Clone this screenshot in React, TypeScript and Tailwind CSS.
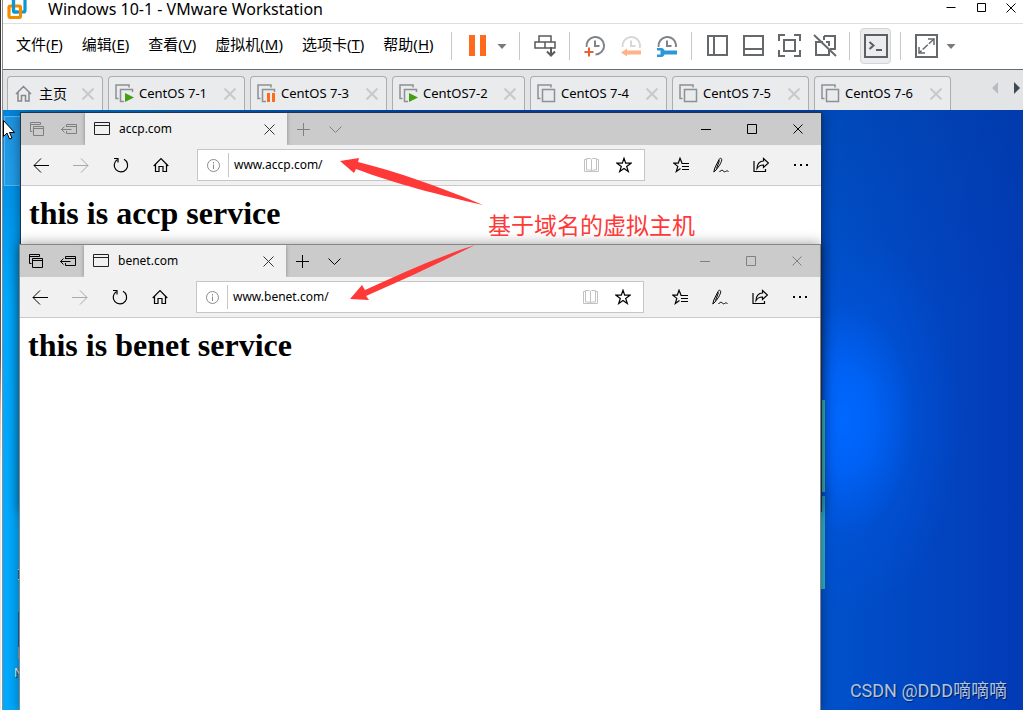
import { useState } from "react"
import type { ReactNode } from "react"
import clsx from "clsx"

type VmState = "running" | "paused" | "off"

const menus = [
    { label: "文件", hotkey: "F" },
    { label: "编辑", hotkey: "E" },
    { label: "查看", hotkey: "V" },
    { label: "虚拟机", hotkey: "M" },
    { label: "选项卡", hotkey: "T" },
    { label: "帮助", hotkey: "H" },
]

const vmTabs: { name: string; state: VmState; width: string }[] = [
    { name: "CentOS 7-1", state: "running", width: "w-[137px]" },
    { name: "CentOS 7-3", state: "paused", width: "w-[137px]" },
    { name: "CentOS7-2", state: "running", width: "w-[133px]" },
    { name: "CentOS 7-4", state: "off", width: "w-[137px]" },
    { name: "CentOS 7-5", state: "off", width: "w-[137px]" },
    { name: "CentOS 7-6", state: "off", width: "w-[137px]" },
]

const uiFont = "font-['Noto_Sans','Noto_Sans_CJK_SC',sans-serif]"

function Icon({ children, size = 24, className }: { children: ReactNode; size?: number; className?: string }) {
    return (
        <svg
            width={size}
            height={size}
            viewBox={`0 0 ${size} ${size}`}
            fill="none"
            stroke="currentColor"
            className={clsx("shrink-0", className)}
            aria-hidden="true"
        >
            {children}
        </svg>
    )
}

function Cross({ size, weight = 1, className }: { size: number; weight?: number; className?: string }) {
    return (
        <Icon size={size} className={className}>
            <path
                d={`M0.5 0.5L${size - 0.5} ${size - 0.5}M${size - 0.5} 0.5L0.5 ${size - 0.5}`}
                strokeWidth={weight}
            />
        </Icon>
    )
}

function Divider() {
    return <span className="mr-px h-7 w-px shrink-0 bg-[#c8c8c8]" />
}

function Caret() {
    return (
        <button aria-label="More" className="shrink-0">
            <Icon size={10} className="text-[#7a7a7a]">
                <path d="M0.5 3h9L5 8z" fill="currentColor" stroke="none" />
            </Icon>
        </button>
    )
}

function Clock({ className, children }: { className: string; children: ReactNode }) {
    return (
        <Icon>
            <g className={className} stroke="currentColor">
                <path d="M3.6 13A8.8 8.8 0 1 1 12.5 20.5" strokeWidth="2" />
                <path d="M12 6.5V12h4.5" strokeWidth="2" />
            </g>
            {children}
        </Icon>
    )
}

function ToolButton({ label, children }: { label: string; children: ReactNode }) {
    return (
        <button aria-label={label} className="shrink-0 text-[#66696c]">
            {children}
        </button>
    )
}

function TitleBar() {
    return (
        <header className="flex h-6 items-start justify-between border-b border-[#dedede] bg-white pr-[7px] pl-1">
            <div className="flex items-start gap-[21px]">
                <svg width="20" height="20" viewBox="0 0 20 20" fill="none" aria-hidden="true">
                    <rect x="6.500" y="-3" width="11.500" height="15" rx="1.500" stroke="#0f95d0" strokeWidth="3.200" />
                    <rect x="2" y="6" width="11.500" height="11.500" rx="1.500" stroke="#f38b00" strokeWidth="3.200" />
                    <path d="M6.500 0v10.500a1.500 1.500 0 0 0 1.500 1.500h3" stroke="#0f95d0" strokeWidth="3.200" />
                </svg>
                <h1 className="text-[16px] leading-[18px] whitespace-nowrap text-black">
                    Windows 10-1 - VMware Workstation
                </h1>
            </div>
            <div className="flex gap-5 pt-[3px] text-black">
                <button aria-label="Minimize">
                    <Icon size={10}><path d="M0.5 4.5h9" /></Icon>
                </button>
                <button aria-label="Maximize">
                    <Icon size={10}><path d="M1.5 0.5h8v8h-8z" /></Icon>
                </button>
                <button aria-label="Close">
                    <Cross size={10} />
                </button>
            </div>
        </header>
    )
}

function MenuBar() {
    return (
        <div className="flex h-[45px] items-center bg-white pb-px">
            <nav className="flex w-[448px] shrink-0 items-center gap-[19px] pb-1 pl-[13px] text-[15px] leading-5 text-black">
                {menus.map(({ label, hotkey }) => (
                    <button key={hotkey} className="whitespace-nowrap">
                        {label}(<u className="underline-offset-2">{hotkey}</u>)
                    </button>
                ))}
            </nav>
            <div className="flex items-center gap-3">
                <Divider />
                <div className="flex items-center gap-2">
                    <ToolButton label="Pause">
                        <Icon><path d="M4 1h6v21H4zM15 1h6v21h-6z" fill="#ff6a1c" stroke="none" /></Icon>
                    </ToolButton>
                    <Caret />
                </div>
                <Divider />
                <ToolButton label="Send Ctrl+Alt+Del">
                    <Icon className="text-[#5a5a5a]">
                        <path d="M6 2h12v6H6zM2 8h10v6H2zM12 8h10v6H12" strokeWidth="1.500" />
                        <path d="M18 13v8M14 17.500l4 4 4-4" strokeWidth="2" />
                    </Icon>
                </ToolButton>
                <Divider />
                <ToolButton label="Take snapshot">
                    <Clock className="text-[#7f8487]">
                        <path d="M1 13h9v10H1z" fill="#fff" stroke="none" />
                        <path d="M6 13.500v9M1.500 18h9" stroke="#e8602c" strokeWidth="2" />
                    </Clock>
                </ToolButton>
                <ToolButton label="Revert snapshot">
                    <Clock className="text-[#d6d8d9]">
                        <path d="M1 14h23v9H1z" fill="#fff" stroke="none" />
                        <path d="M2 18.500l6-4v2h14v4H8v2z" fill="#ffb28c" stroke="none" />
                    </Clock>
                </ToolButton>
                <ToolButton label="Manage snapshots">
                    <Clock className="text-[#7f8487]">
                        <path d="M1 13h23v10H1z" fill="#fff" stroke="none" />
                        <path
                            d="M2 14h4.500c1.500 0 2.500 1.200 3 2.500H22v4H9.500c-.5 1.300-1.500 2.500-3 2.500H2v-2.500h3.500v-4H2z"
                            fill="#2b96d8"
                            stroke="none"
                        />
                    </Clock>
                </ToolButton>
                <Divider />
                <ToolButton label="Show library">
                    <Icon><path d="M3 2h19v19H3zM9 2v19" strokeWidth="2" /></Icon>
                </ToolButton>
                <ToolButton label="Show thumbnail bar">
                    <Icon><path d="M3 2h19v19H3zM3 15h19" strokeWidth="2" /></Icon>
                </ToolButton>
                <ToolButton label="Full screen">
                    <Icon>
                        <path d="M7 6h11v11H7z" strokeWidth="2" />
                        <path d="M2 7V1h6M17 1h6v6M23 16v6h-6M8 22H2v-6" strokeWidth="2" />
                    </Icon>
                </ToolButton>
                <ToolButton label="Unity">
                    <Icon>
                        <path d="M11 2h11v13h-5M10 8H3v13h13v-5M11 2v4M16 12V8h-3" strokeWidth="2" />
                        <path d="M1 1l22 21" strokeWidth="2" />
                    </Icon>
                </ToolButton>
                <Divider />
                <button
                    aria-label="Console view"
                    className="-mx-[3px] flex h-9 w-[31px] items-center justify-center rounded border border-[#d4d4d4] bg-[#ececee] text-[#5a5f63]"
                >
                    <Icon>
                        <path d="M1 1h22v22H1z" strokeWidth="2" />
                        <path d="M5.500 8l4 3.500-4 3.500M12 16h6" strokeWidth="2" />
                    </Icon>
                </button>
                <Divider />
                <div className="flex items-center gap-2">
                    <ToolButton label="Stretch guest">
                        <Icon>
                            <path d="M2 1h21v22H2z" strokeWidth="2" />
                            <path d="M14 5h6v6M11 19H5v-6" strokeWidth="1.500" />
                            <path d="M20 5L5 19" strokeWidth="1.500" strokeDasharray="7 1.500" />
                        </Icon>
                    </ToolButton>
                    <Caret />
                </div>
            </div>
        </div>
    )
}

function VmIcon({ state }: { state: VmState }) {
    return (
        <Icon size={19} className="text-[#8d9092]">
            <path d="M3.500 14.500H1V1h13v2.500" strokeWidth="1.500" />
            <path d="M5.500 5.500h12v12h-12z" strokeWidth="1.500" />
            {state === "running" && (
                <>
                    <path d="M9 8h10v11H9z" fill="#eaebed" stroke="none" />
                    <path d="M10 9v9l9-4.500z" fill="#44a010" stroke="none" />
                </>
            )}
            {state === "paused" && (
                <>
                    <path d="M9 8h10v11H9z" fill="#eaebed" stroke="none" />
                    <path d="M10 9h3v9h-3zM15 9h3v9h-3z" fill="#ff6a1c" stroke="none" />
                </>
            )}
        </Icon>
    )
}

function TabStrip() {
    const [active, setActive] = useState("CentOS 7-1")
    const shell = "flex h-[34px] shrink-0 items-center rounded-t border border-b-0 border-[#adadad] bg-[#eaebed]"

    return (
        <div className="flex h-[41px] items-end border-t border-[#6a6a6a] bg-[#e3e4e6] pl-1">
            <div className="flex gap-[5px]">
                <div className={clsx(shell, "w-24 justify-between pr-2 pl-[7px]")}>
                    <button className="flex items-center gap-[7px] text-sm text-black">
                        <Icon size={17} className="text-[#85898b]">
                            <path d="M1 9l7.500-7.500L16 9M3 7.500V16h3.500v-5.500h4V16H14V7.500" strokeWidth="1.500" />
                        </Icon>
                        主页
                    </button>
                    <button aria-label="Close home">
                        <Cross size={12} weight={2} className="text-[#c9c9c9]" />
                    </button>
                </div>
                {vmTabs.map(({ name, state, width }) => (
                    <div key={name} className={clsx(shell, width, "justify-between pr-2 pl-1.5")}>
                        <button
                            className="flex items-center gap-[5px] text-[13px] whitespace-nowrap text-black"
                            aria-pressed={active === name}
                            onClick={() => setActive(name)}
                        >
                            <VmIcon state={state} />
                            {name}
                        </button>
                        <button aria-label={`Close ${name}`}>
                            <Cross size={12} weight={2} className="text-[#c9c9c9]" />
                        </button>
                    </div>
                ))}
            </div>
            <div className="ml-auto flex gap-[15px] self-start pt-3">
                <button aria-label="Scroll tabs left">
                    <svg width="7" height="12" viewBox="0 0 7 12" aria-hidden="true">
                        <path d="M6 0v12L0 6z" fill="#b9bcbf" />
                    </svg>
                </button>
                <button aria-label="Scroll tabs right">
                    <svg width="9" height="12" viewBox="0 0 9 12" aria-hidden="true">
                        <path d="M0 0v12l6-6z" fill="#3d4a55" />
                    </svg>
                </button>
            </div>
        </div>
    )
}

function BarButton({ label, className, children }: { label: string; className?: string; children: ReactNode }) {
    return (
        <button aria-label={label} className={clsx("flex w-10 shrink-0 items-center justify-center", className)}>
            {children}
        </button>
    )
}

interface BrowserProps {
    host: string
    heading: string
    className: string
    auxClass: string
    controlClass: string
}

function BrowserWindow({ host, heading, className, auxClass, controlClass }: BrowserProps) {
    const [url, setUrl] = useState(`www.${host}/`)

    return (
        <section className={clsx("absolute flex w-[802px] flex-col border bg-white", className)}>
            <div className="flex h-8 shrink-0 items-stretch bg-[#cbcbcb]">
                <div className={clsx("flex w-16 items-center justify-between pr-2 pl-2", auxClass)}>
                    <button aria-label="Tabs set aside">
                        <Icon size={16}>
                            <path d="M3.500 10.500h-2v-9h10v2M1.500 3.500h10" />
                            <path d="M4.500 5.500h10v9h-10zM4.500 7.500h10" />
                        </Icon>
                    </button>
                    <button aria-label="Set tabs aside">
                        <Icon size={16}>
                            <path d="M5.500 6V3.500h10v9h-10V10M5.500 5.500h10" />
                            <path d="M0.500 8.500h10M3.500 5.500l-3 3 3 3" />
                        </Icon>
                    </button>
                </div>
                <div className="flex w-[202px] items-center bg-[#f1f1f1] pr-3 pl-2 shadow-[0_0_4px_rgba(0,0,0,0.35)] [clip-path:inset(0_-6px_0_-6px)]">
                    <Icon size={18} className="text-[#222]">
                        <path d="M1.500 2.500h15v12h-15zM1.500 5.500h15" />
                    </Icon>
                    <span className="ml-2 flex-1 text-[12px] leading-4 text-black">{host}</span>
                    <button aria-label="Close tab">
                        <Cross size={11} className="text-[#333]" />
                    </button>
                </div>
                <div className={clsx("flex items-center gap-[19px] pl-[10px]", auxClass)}>
                    <button aria-label="New tab">
                        <Icon size={13}><path d="M6.500 0v13M0 6.500h13" /></Icon>
                    </button>
                    <button aria-label="Tab previews">
                        <Icon size={13}><path d="M0.500 3.500l6 6 6-6" /></Icon>
                    </button>
                </div>
                <div className={clsx("ml-auto flex", controlClass)}>
                    <button aria-label="Minimize" className="flex w-[46px] items-center justify-center">
                        <Icon size={10}><path d="M0 5.500h10" /></Icon>
                    </button>
                    <button aria-label="Maximize" className="flex w-[46px] items-center justify-center">
                        <Icon size={10}><path d="M0.500 0.500h9v9h-9z" /></Icon>
                    </button>
                    <button aria-label="Close" className="flex w-[46px] items-center justify-center">
                        <Cross size={10} />
                    </button>
                </div>
            </div>

            <div className="flex h-[41px] shrink-0 items-stretch border-b border-[#cacaca] bg-[#f1f1f1] text-black">
                <BarButton label="Back">
                    <Icon size={16}><path d="M1 8.500h15M8 1.500l-7 7 7 7" /></Icon>
                </BarButton>
                <BarButton label="Forward" className="text-[#a8a8a8]">
                    <Icon size={16}><path d="M0 8.500h15M8 1.500l7 7-7 7" /></Icon>
                </BarButton>
                <BarButton label="Refresh">
                    <Icon size={16}>
                        <path d="M11 2.300A6.700 6.700 0 1 1 4.500 2.500" strokeWidth="1.200" />
                        <path d="M1 1.500h4v4" strokeWidth="1.200" />
                    </Icon>
                </BarButton>
                <BarButton label="Home">
                    <Icon size={16}>
                        <path d="M0.700 9L8 1.700 15.300 9M2.500 7.500v7h3.500v-5h4v5h3.500v-7" strokeWidth="1.200" />
                    </Icon>
                </BarButton>
                <div className="mx-4 my-1 flex flex-1 items-center border border-[#c6c6c6] bg-white">
                    <Icon size={15} className="ml-2 text-[#8a8a8a]">
                        <circle cx="7.500" cy="7.500" r="6" />
                        <path d="M7.500 6.500V11M7.500 4v1.500" />
                    </Icon>
                    <span className="ml-[7px] h-6 w-px bg-[#c6c6c6]" />
                    <input
                        aria-label="Address"
                        value={url}
                        onChange={(e) => setUrl(e.target.value)}
                        className="min-w-0 flex-1 bg-transparent pl-[5px] text-[12px] leading-5 text-black outline-none"
                    />
                    <button aria-label="Reading view">
                        <Icon size={16} className="text-[#c2c2c2]">
                            <path d="M2.500 2.500H0.500v12h14v-12h-2M2.500 1.500h4l1 1 1-1h4v11.500h-4l-1 1-1-1h-4zM7.500 2.500V14" />
                        </Icon>
                    </button>
                    <button aria-label="Add to favorites" className="mr-3 ml-4">
                        <Icon size={16}>
                            <path d="M8 1.200l1.700 5h5.300l-4.300 3.200 1.600 5.100L8 11.400l-4.300 3.100 1.600-5.100L1 6.200h5.300z" strokeWidth="1.200" />
                        </Icon>
                    </button>
                </div>
                <BarButton label="Hub">
                    <Icon size={16}>
                        <path d="M9 6L7 1.200l-1.700 5H0.800l4 3.200-1.500 5.100L7.500 11.500" strokeWidth="1.200" />
                        <path d="M8.500 6.500h7.500M9 9.500h7M9 12.500h7" />
                    </Icon>
                </BarButton>
                <BarButton label="Add notes">
                    <Icon size={16}>
                        <path d="M0.800 15l1-4 4.200-8.500c.8-1.800 3-1.500 2.700.6-.2 1.400-1 3-2.200 5.200L3 13zM6.500 3.500l-3 8" />
                        <path d="M6.500 15c1-1.500 2.500-2.300 3.500-1.300s1.500 1.500 2.500.8 1.500-1 3 0" />
                    </Icon>
                </BarButton>
                <BarButton label="Share">
                    <Icon size={16}>
                        <path d="M1 4v10.500h11.500V12" strokeWidth="1.200" />
                        <path d="M10.500 1.500l5 4.500-5 4.500V8C7.500 8 5.500 9 4 11.500c0-4.500 2.500-7.500 6.500-7.500z" strokeWidth="1.200" />
                    </Icon>
                </BarButton>
                <BarButton label="More">
                    <Icon size={16}>
                        <path d="M1 7h2v2H1zM7 7h2v2H7zM13 7h2v2h-2z" fill="currentColor" stroke="none" />
                    </Icon>
                </BarButton>
            </div>

            <main className="flex-1 px-2 pt-2">
                <h2 className="font-['Liberation_Serif',serif] text-[32px] leading-[38px] font-bold text-black">{heading}</h2>
            </main>
        </section>
    )
}

function Desktop() {
    return (
        <div className="relative min-h-[600px] flex-1 overflow-hidden bg-[radial-gradient(ellipse_120px_190px_at_840px_310px,#0068ff_0%,#0062f5_25%,#0054dc80_60%,#004fd000_100%),linear-gradient(90deg,#00aaff_0%,#00aaff_2%,#0058d0_40%,#0052cc_80%,#033ab6_100%)]">
            <div className="absolute top-0 left-0 h-48 w-full bg-[linear-gradient(180deg,#003c9c58,#003c9c00)]" />
            <div className="absolute top-[6px] left-px h-[70px] w-20 border border-[#58b6f2] bg-[#ffffff20]" />
            {/* right edge of the wallpaper's lit window panes */}
            <div className="absolute top-[290px] left-[700px] h-[92px] w-[122px] bg-[#3cc4c0]" />
            <div className="absolute top-[386px] left-[700px] h-[93px] w-[122px] bg-[#2fb0c4]" />
            <div className="absolute top-[459px] left-[15px] h-[11px] w-6 border-y border-[#cfe8f5] bg-[#2a6f9c]" />
            <div className="absolute top-[502px] left-[15px] h-[35px] w-6 bg-[#1268b8]" />
            <div className="absolute top-[537px] left-[15px] h-3 w-6 bg-[#9a9a9a]" />
            <span className="absolute top-[555px] left-[11px] text-[12px] leading-4 text-white [text-shadow:1px_1px_1px_#000]">N</span>

            <BrowserWindow
                host="accp.com"
                heading="this is accp service"
                className="top-[2px] left-[17px] h-[400px] border-[#1c3550] shadow-[0_0_12px_rgba(0,0,0,0.45)]"
                auxClass="text-[#808080]"
                controlClass="text-black"
            />
            <BrowserWindow
                host="benet.com"
                heading="this is benet service"
                className="top-[134px] -bottom-px left-4 border-[#858585] shadow-[0_0_12px_rgba(0,0,0,0.4)]"
                auxClass="text-black"
                controlClass="text-[#808080]"
            />

            {/* annotation arrows and their caption */}
            <svg className="pointer-events-none absolute top-10 left-[330px]" width="160" height="160" viewBox="0 0 160 160" aria-hidden="true">
                <g fill="#ff3838">
                    <path d="M7 11l19-3-1 4c40 10 80 24 125 43C110 46 60 33 23 19l-2 4z" />
                    <path d="M17 149l12-14 3 5c35-16 70-32 110-45C108 112 70 130 33 146l3 4z" />
                </g>
            </svg>
            <p className="absolute top-[101px] left-[485px] text-[23px] leading-7 whitespace-nowrap text-[#ff3838]">
                基于域名的虚拟主机
            </p>

            <svg className="absolute top-[10px] left-0" width="13" height="20" viewBox="0 0 13 20" aria-hidden="true">
                <path d="M0.500 0.500v16l3.500-3.500 2.500 6 2.500-1-2.500-5.500h5z" fill="#fff" stroke="#000" />
            </svg>
            <p className="absolute right-4 bottom-[7px] font-['Roboto','Noto_Sans_CJK_SC',sans-serif] text-[18px] leading-6 whitespace-nowrap text-[#b4c2de] [text-shadow:1px_1px_1px_#00000080]">
                CSDN @DDD嘀嘀嘀
            </p>
        </div>
    )
}

export default function App() {
    return (
        <div className={clsx("flex min-h-screen overflow-hidden bg-white", uiFont)}>
            <div className="w-[3px] shrink-0 border-r border-[#8a8a8a] bg-[linear-gradient(180deg,#333_0%,#5a5060_50%,#e0b8a8_58%,#e8e8e8_66%,#e8e8e8_100%)] bg-[length:1px_100%] bg-no-repeat" />
            <div className="flex min-w-0 flex-1 flex-col">
                <TitleBar />
                <MenuBar />
                <TabStrip />
                <Desktop />
            </div>
        </div>
    )
}
